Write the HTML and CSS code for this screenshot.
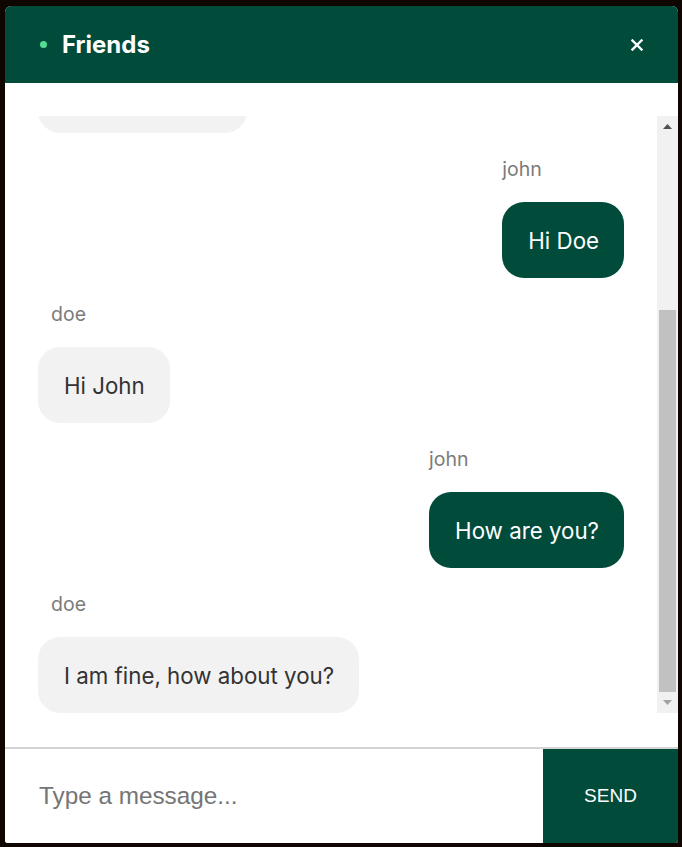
FILE: index.html
```html
<!DOCTYPE html>
<html lang="en">
<head>
<meta charset="utf-8">
<title>Friends</title>
<link rel="stylesheet" href="styles.css">
</head>
<body>
<div class="chat">
  <header class="chat-header">
    <span class="status-dot"></span>
    <h1 class="chat-title">Friends</h1>
    <button class="close-btn" aria-label="Close">
      <svg width="12" height="12" viewBox="0 0 12 12"><path d="M1.5 1.5 L10.5 10.5 M10.5 1.5 L1.5 10.5" stroke="#fff" stroke-width="2.4" stroke-linecap="square"/></svg>
    </button>
  </header>
  <div class="messages-wrap">
    <div class="messages-body">
      <div class="messages-scroll">
        <div class="messages">
          <div class="msg msg-out">
            <div class="msg-author">john</div>
            <div class="bubble">Hello there</div>
          </div>
          <div class="msg msg-in">
            <div class="msg-author">doe</div>
            <div class="bubble">Hi, who is this?</div>
          </div>
          <div class="msg msg-out">
            <div class="msg-author">john</div>
            <div class="bubble">Hi Doe</div>
          </div>
          <div class="msg msg-in">
            <div class="msg-author">doe</div>
            <div class="bubble">Hi John</div>
          </div>
          <div class="msg msg-out">
            <div class="msg-author">john</div>
            <div class="bubble">How are you?</div>
          </div>
          <div class="msg msg-in">
            <div class="msg-author">doe</div>
            <div class="bubble">I am fine, how about you?</div>
          </div>
        </div>
      </div>
      <div class="scrollbar" aria-hidden="true">
        <div class="sb-btn">
          <svg width="9" height="5" viewBox="0 0 9 5"><polygon points="0,5 4.5,0 9,5" fill="#505050"/></svg>
        </div>
        <div class="sb-track">
          <div class="sb-thumb"></div>
        </div>
        <div class="sb-btn">
          <svg width="9" height="5" viewBox="0 0 9 5"><polygon points="0,0 9,0 4.5,5" fill="#a3a3a3"/></svg>
        </div>
      </div>
    </div>
  </div>
  <form class="composer">
    <input class="composer-input" type="text" placeholder="Type a message...">
    <button class="send-btn" type="button">SEND</button>
  </form>
</div>
</body>
</html>
```
FILE: styles.css
```css
* { box-sizing: border-box; }

html, body { height: 100%; }

body {
  margin: 0;
  padding: 6px 4px 4px 5px;
  background: #0f0601;
  font-family: Inter, "Noto Sans", sans-serif;
}

.chat {
  height: 100%;
  display: flex;
  flex-direction: column;
  background: #ffffff;
  border-radius: 6px 6px 3px 3px;
  overflow: hidden;
}

.chat-header {
  flex: 0 0 77px;
  display: flex;
  align-items: center;
  padding: 0 35px 0 35px;
  background: #014b3b;
}

.status-dot {
  width: 7px;
  height: 7px;
  border-radius: 50%;
  background: #4fde93;
  margin-right: 15px;
}

.chat-title {
  margin: 0;
  font-size: 24px;
  font-weight: 700;
  color: #ffffff;
}

.close-btn {
  margin-left: auto;
  padding: 0;
  border: none;
  background: transparent;
  display: flex;
}

.messages-wrap {
  flex: 1;
  min-height: 0;
  padding: 33px 0 34px;
  border-bottom: 2px solid #d4d4d4;
}

.messages-body {
  height: 100%;
  display: flex;
}

.messages-scroll {
  flex: 1;
  min-width: 0;
  overflow: hidden;
  display: flex;
  flex-direction: column-reverse;
  padding: 0 33px;
}

.scrollbar {
  flex: 0 0 21px;
  display: flex;
  flex-direction: column;
  background: #f1f1f1;
}

.sb-btn {
  flex: 0 0 21px;
  display: flex;
  align-items: center;
  justify-content: center;
}

.sb-track {
  flex: 1;
  display: flex;
  flex-direction: column;
  justify-content: flex-end;
}

.sb-thumb {
  height: 382px;
  margin: 0 2px;
  background: #c1c1c1;
}

.messages {
  display: flex;
  flex-direction: column;
  gap: 24px;
  padding-top: 23px;
}

.msg {
  display: flex;
  flex-direction: column;
  align-items: flex-start;
}

.msg-out { align-self: flex-end; }
.msg-in { align-self: flex-start; }

.msg-author {
  height: 24px;
  line-height: 24px;
  margin-bottom: 21px;
  font-size: 19.5px;
  color: #7b7b7b;
}

.msg-in .msg-author { padding-left: 13px; }

.bubble {
  height: 76px;
  display: flex;
  align-items: center;
  padding: 0 25px 0 26px;
  border-radius: 22px;
  font-size: 22.3px;
  white-space: nowrap;
}

.msg-in .bubble {
  background: #f2f2f2;
  color: #333333;
}

.msg-out .bubble {
  background: #014b3b;
  color: #ffffff;
}

.composer {
  flex: 0 0 94px;
  display: flex;
  margin: 0;
}

.composer-input {
  flex: 1;
  min-width: 0;
  border: none;
  outline: none;
  padding: 0 0 0 34px;
  font-family: "Liberation Sans", Arial, sans-serif;
  font-size: 24.3px;
  color: #333;
  background: #fff;
}

.composer-input::placeholder { color: #757575; }

.send-btn {
  flex: 0 0 135px;
  border: none;
  background: #014b3b;
  color: #ffffff;
  font-family: "Liberation Sans", Arial, sans-serif;
  font-size: 19px;
}
```
